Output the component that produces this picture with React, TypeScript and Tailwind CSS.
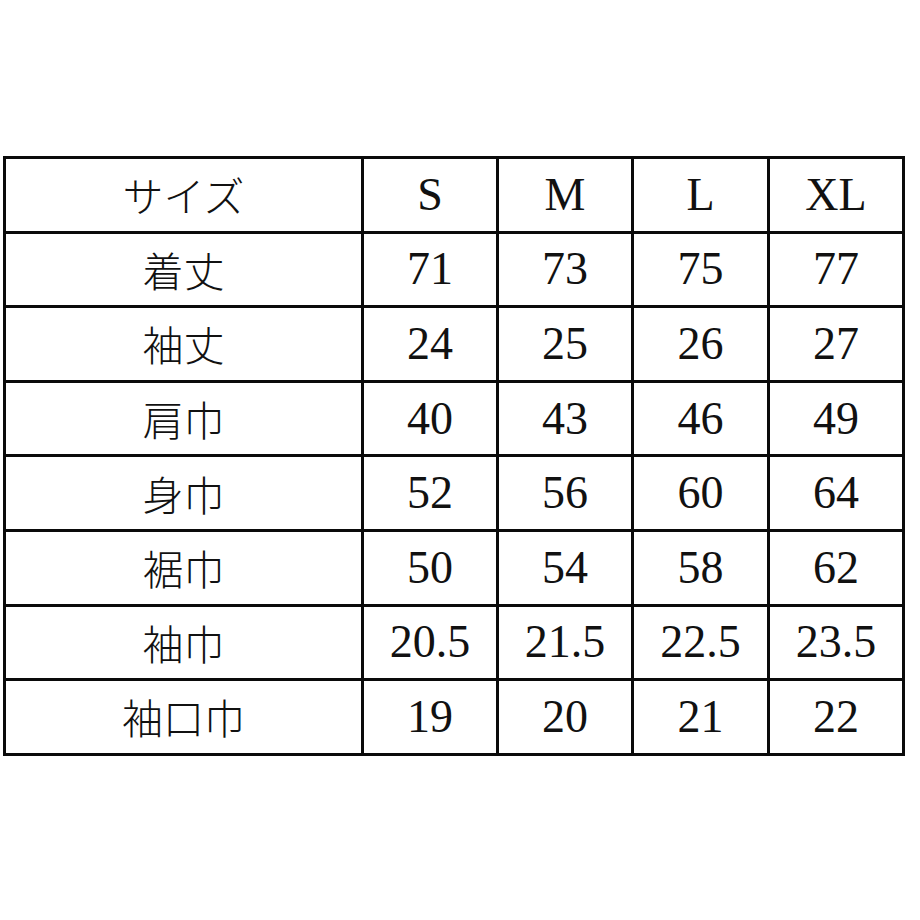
import { Fragment } from "react";

const sizes = ["S", "M", "L", "XL"];

const rows: [string, string[]][] = [
  ["着丈", ["71", "73", "75", "77"]],
  ["袖丈", ["24", "25", "26", "27"]],
  ["肩巾", ["40", "43", "46", "49"]],
  ["身巾", ["52", "56", "60", "64"]],
  ["裾巾", ["50", "54", "58", "62"]],
  ["袖巾", ["20.5", "21.5", "22.5", "23.5"]],
  ["袖口巾", ["19", "20", "21", "22"]],
];

const jp = "font-['Noto_Sans_CJK_JP',sans-serif] text-[41px] font-light";
const num = "font-['Liberation_Serif','Times_New_Roman',serif] text-[46px]";

function Cell({ children, className }: { children: React.ReactNode; className: string }) {
  return (
    <div className={`bg-white h-[71.6px] flex items-center justify-center leading-none text-[#111] ${className}`}>
      {children}
    </div>
  );
}

export default function App() {
  return (
    <div className="w-[920px] h-[920px] bg-white pt-[156px] pl-[3px]">
      <div className="inline-grid grid-cols-[355px_132px_132px_133px_132px] gap-[3px] p-[3px] bg-[#0a0a0a]">
        <Cell className={jp}>サイズ</Cell>
        {sizes.map((s) => (
          <Cell key={s} className={num}>{s}</Cell>
        ))}
        {rows.map(([label, vals]) => (
          <Fragment key={label}>
            <Cell className={jp}>{label}</Cell>
            {vals.map((v, i) => (
              <Cell key={i} className={num}>{v}</Cell>
            ))}
          </Fragment>
        ))}
      </div>
    </div>
  );
}
